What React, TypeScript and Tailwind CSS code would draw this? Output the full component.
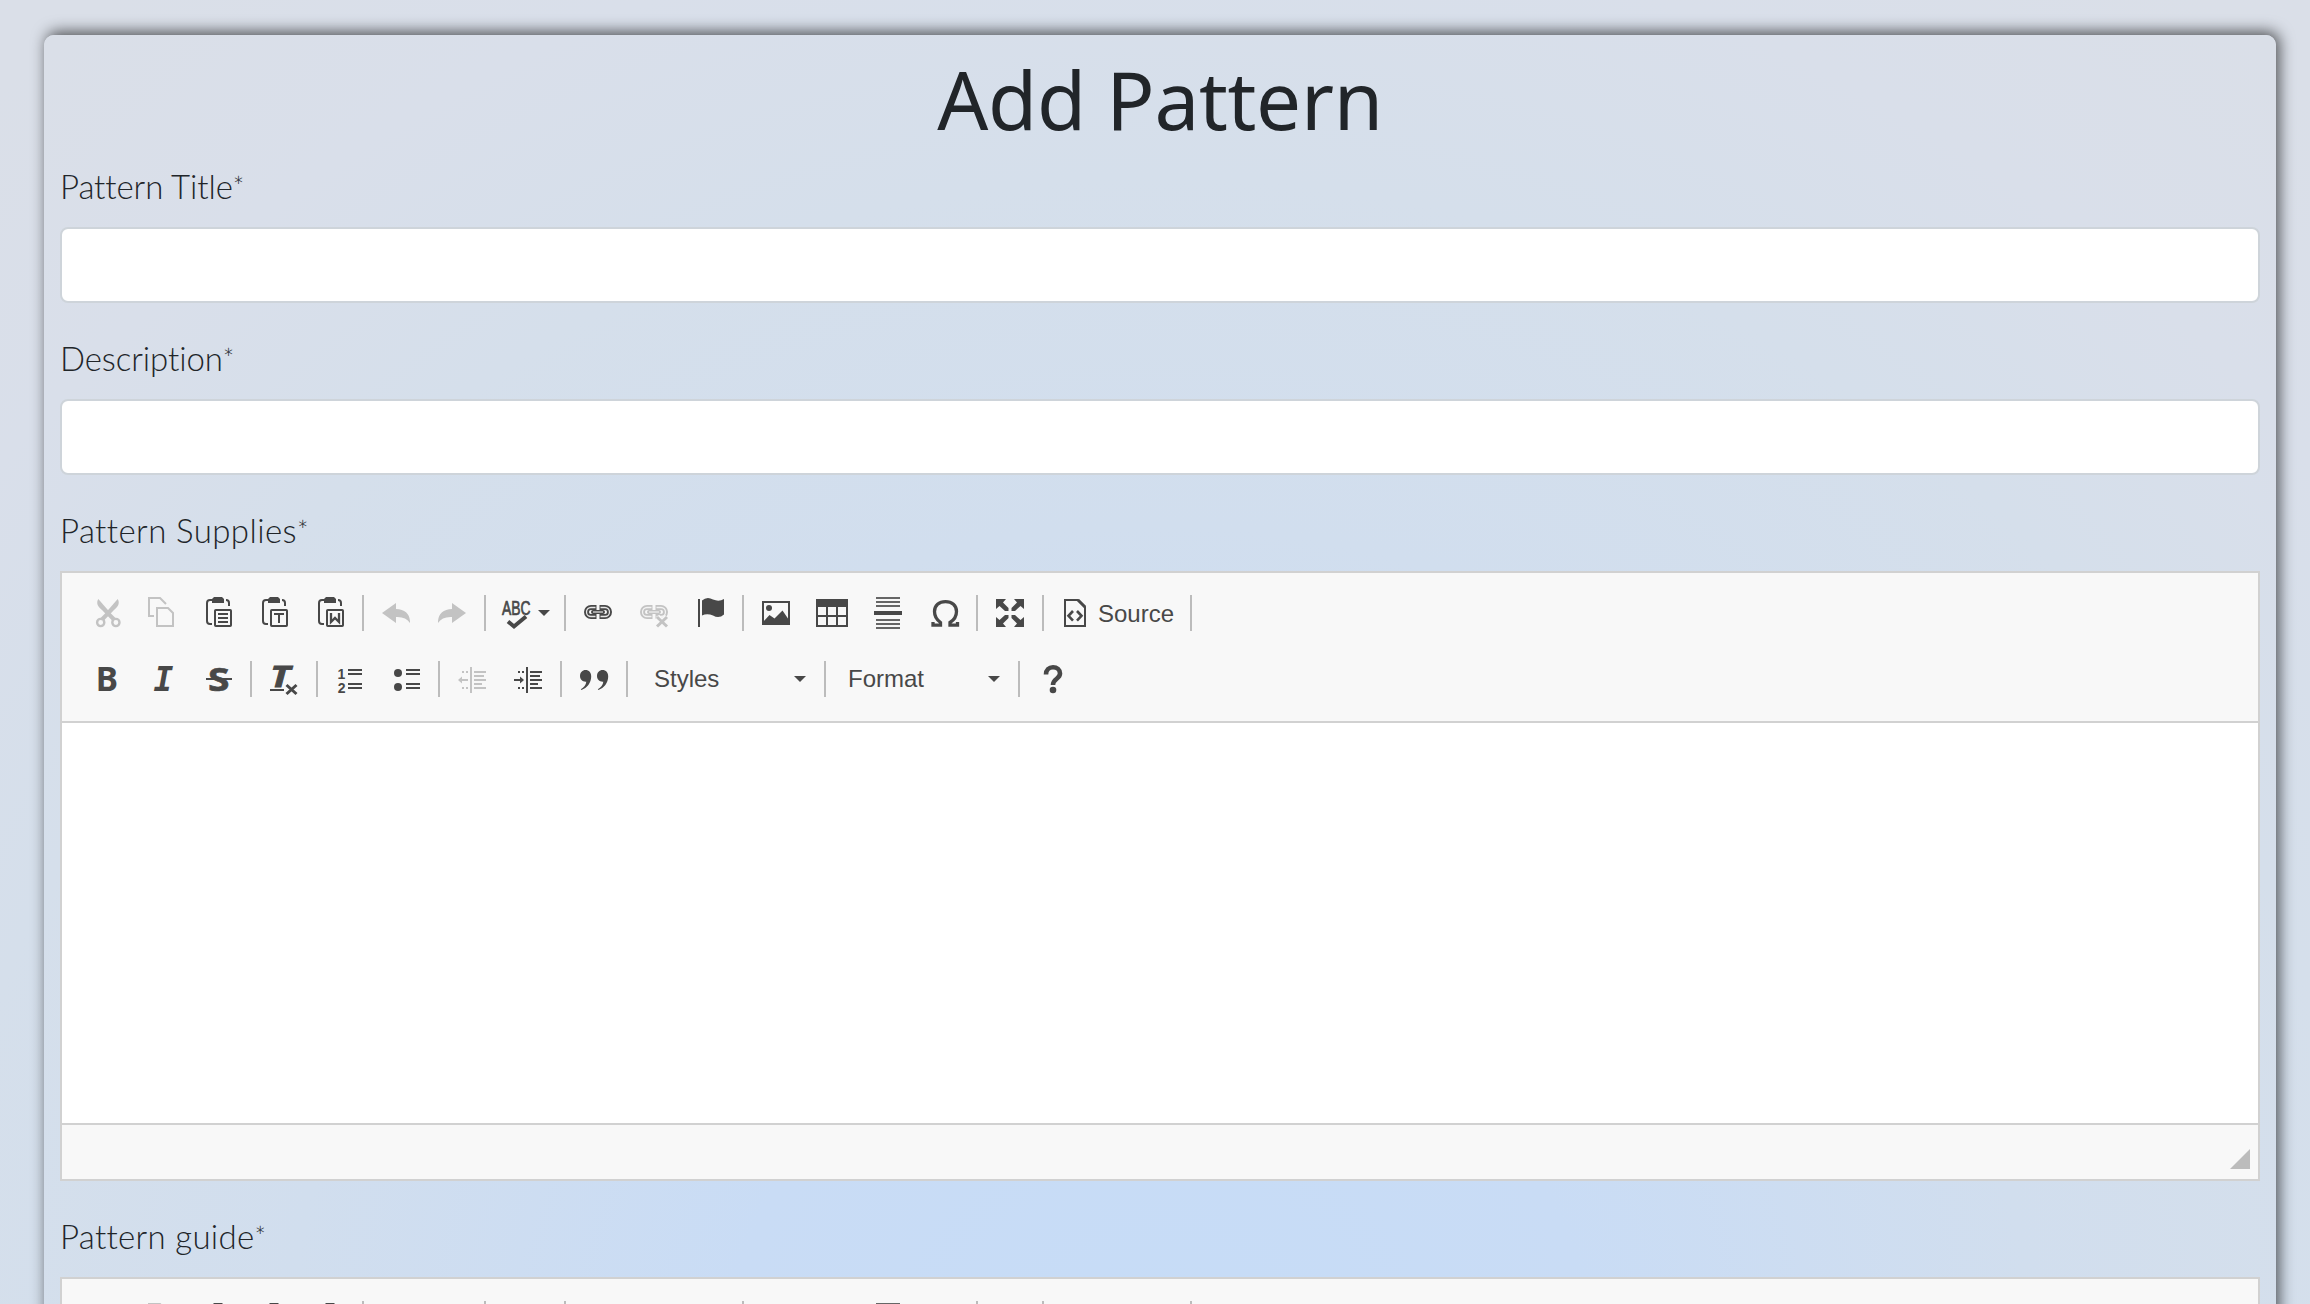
import React from "react";

const DARK = "#484848";
const MUTED = "#c3c3c3";

function Icon({ children, off }: { children: React.ReactNode; off?: boolean }) {
  return (
    <svg
      width="32"
      height="32"
      viewBox="0 0 32 32"
      fill="none"
      stroke="none"
      className="block shrink-0 overflow-visible"
      style={{ color: off ? MUTED : DARK }}
    >
      {children}
    </svg>
  );
}

function Btn({ children, off, label }: { children: React.ReactNode; off?: boolean; label: string }) {
  return (
    <button type="button" aria-label={label} className="flex h-9 w-14 shrink-0 items-center justify-center">
      <Icon off={off}>{children}</Icon>
    </button>
  );
}

function Sep() {
  return <span className="mx-1 h-9 w-0.5 shrink-0 bg-[#bcbcbc]" />;
}

function Caret() {
  return (
    <svg width="12" height="6" viewBox="0 0 12 6" className="block shrink-0">
      <path d="M0 0H12L6 6Z" fill={DARK} />
    </svg>
  );
}

const clipboard = (
  <>
    <path d="M10 3H8Q5 3 5 6V24Q5 27 8 27H10M24 3Q27 3 27 6V9" stroke="currentColor" strokeWidth="2" />
    <path d="M12 0H20L22 2V6H10V2Z" fill="currentColor" />
    <rect x="13" y="13" width="16" height="16" rx="0.8" stroke="currentColor" strokeWidth="2" />
  </>
);

const undoShape = "M2 16L16 6V12Q29 12.5 30 24V26Q26 19.500 16 20V26Z";

const chain = (
  <>
    <path
      d="M14.500 10.500H9A4.500 4.500 0 0 0 9 19.500H14.500M17.500 10.500H23A4.500 4.500 0 0 1 23 19.500H17.500"
      stroke="currentColor"
      strokeWidth="5"
    />
    <path
      d="M13.500 10.500H9A4.500 4.500 0 0 0 9 19.500H13.500M18.500 10.500H23A4.500 4.500 0 0 1 23 19.500H18.500"
      stroke="#f8f8f8"
      strokeWidth="1.300"
      opacity="0.9"
    />
    <path d="M11 15H21" stroke="currentColor" strokeWidth="4" strokeLinecap="round" />
    <path d="M11 15H21" stroke="#f8f8f8" strokeWidth="1.200" opacity="0.9" />
  </>
);

function IndentLines() {
  return (
    <path
      d="M15 4V30M18 9H30M18 13H28M18 17H30M18 21H26M18 25H30M6 9H8M10 9H12M6 25H8M10 25H12"
      stroke="currentColor"
      strokeWidth="2"
    />
  );
}

function TopRow() {
  return (
    <div className="flex h-9 items-center">
      <Btn label="Cut" off>
        <path d="M8.300 2C5.800 6 8 10 12 13L23 24.500L26 21.500L20.500 16Z" fill="currentColor" />
        <path d="M27.700 2C30.200 6 28 10 24 13L13 24.500L10 21.500L15.500 16Z" fill="currentColor" />
        <circle cx="10.700" cy="25.500" r="3.600" stroke="currentColor" strokeWidth="2.400" fill="#f8f8f8" />
        <circle cx="25.900" cy="25.500" r="3.600" stroke="currentColor" strokeWidth="2.400" fill="#f8f8f8" />
      </Btn>
      <Btn label="Copy" off>
        <path d="M8 19H3V1H14L20 7M11 11H22L27 16V29H11Z" stroke="currentColor" strokeWidth="2" />
      </Btn>
      <Btn label="Paste">
        {clipboard}
        <path d="M16 17H26M16 21H26M16 25H26" stroke="currentColor" strokeWidth="1.800" />
      </Btn>
      <Btn label="Paste as plain text">
        {clipboard}
        <path d="M16 17H26M21 17V26" stroke="currentColor" strokeWidth="2" />
      </Btn>
      <Btn label="Paste from Word">
        {clipboard}
        <path d="M17 16V25L21 21L25 25V16" stroke="currentColor" strokeWidth="2.300" />
      </Btn>
      <Sep />
      <Btn label="Undo" off>
        <path d={undoShape} fill="currentColor" />
      </Btn>
      <Btn label="Redo" off>
        <path d={undoShape} fill="currentColor" transform="translate(32 0) scale(-1 1)" />
      </Btn>
      <Sep />
      <button type="button" aria-label="Spell check" className="flex h-9 w-[70px] shrink-0 items-center gap-1 pl-3">
        <Icon>
          <text
            x="0"
            y="18"
            fontFamily="Liberation Sans"
            fontSize="19.500"
            textLength="28.500"
            lengthAdjust="spacingAndGlyphs"
            fill="currentColor"
            stroke="currentColor"
            strokeWidth="0.700"
          >
            ABC
          </text>
          <path d="M6 24.500L12 29.500L24 19.500" stroke="#f8f8f8" strokeWidth="6" />
          <path d="M6 24.500L12 29.500L24 19.500" stroke="currentColor" strokeWidth="4" />
        </Icon>
        <Caret />
      </button>
      <Sep />
      <Btn label="Link">{chain}</Btn>
      <Btn label="Unlink" off>
        {chain}
        <path d="M19 20L29 29.500M29 20L19 29.500" stroke="#f8f8f8" strokeWidth="6" />
        <path d="M19 20L29 29.500M29 20L19 29.500" stroke="currentColor" strokeWidth="3" />
      </Btn>
      <Btn label="Anchor">
        <path d="M4 2H6V30H4Z" fill="currentColor" />
        <path d="M8 3.500Q13 -1 19 2.500Q25 5 30 2V17.500Q25 22 19 18.500Q13 16 8 18.500Z" fill="currentColor" />
      </Btn>
      <Sep />
      <Btn label="Image">
        <rect x="3" y="5" width="26" height="22" stroke="currentColor" strokeWidth="2" />
        <circle cx="9" cy="11" r="3" fill="currentColor" />
        <path d="M3 27V25L9.500 18L14.500 21.500L22.500 13.500L29 23V27Z" fill="currentColor" />
      </Btn>
      <Btn label="Table">
        <path d="M0 2H32V10H0Z" fill="currentColor" />
        <path d="M1 9V29H31V9M11 9V29M21 9V29M1 19H31" stroke="currentColor" strokeWidth="2" />
      </Btn>
      <Btn label="Horizontal line">
        <path d="M2 14H30V18H2Z" fill="currentColor" />
        <path d="M4 1H28M4 5H28M4 9H28M4 23H28M4 27H28M4 31H28" stroke="#666666" strokeWidth="2" />
      </Btn>
      <Btn label="Special character">
        <path
          d="M5 25V28.200H12.500V25.500C9 23 6.500 19 6.500 14.500C6.500 8.500 11 4.600 17.500 4.600C24 4.600 28.500 8.500 28.500 14.500C28.500 19 26 23 22 25.500V28.200H29.500V25"
          stroke="currentColor"
          strokeWidth="3.300"
        />
      </Btn>
      <Sep />
      <Btn label="Maximize">
        <g fill="currentColor">
          <path d="M2 2H12L9 5.500L14.500 11V14H11L5.500 9L2 12Z" />
          <path d="M2 2H12L9 5.500L14.500 11V14H11L5.500 9L2 12Z" transform="translate(32 0) scale(-1 1)" />
          <path d="M2 2H12L9 5.500L14.500 11V14H11L5.500 9L2 12Z" transform="translate(0 32) scale(1 -1)" />
          <path d="M2 2H12L9 5.500L14.500 11V14H11L5.500 9L2 12Z" transform="translate(32 32) scale(-1 -1)" />
        </g>
      </Btn>
      <Sep />
      <button type="button" className="flex h-9 w-[138px] shrink-0 items-center gap-1.5 pl-3">
        <Icon>
          <path d="M5 3H18L25 10V29H5Z" stroke="currentColor" strokeWidth="2" />
          <path d="M18 3L25 10" stroke="currentColor" strokeWidth="3" />
          <path d="M13 14L8.500 18.800L13 23.600M17 14L21.500 18.800L17 23.600" stroke="currentColor" strokeWidth="2.600" />
        </Icon>
        <span className="pt-0.5">Source</span>
      </button>
      <Sep />
    </div>
  );
}

function BottomRow() {
  return (
    <div className="flex h-9 items-center">
      <Btn label="Bold">
        <text x="5.800" y="28" fontFamily="Noto Sans" fontWeight="700" fontSize="33.500" fill="currentColor">
          B
        </text>
      </Btn>
      <Btn label="Italic">
        <text x="7.500" y="28" fontFamily="DejaVu Sans Mono" fontWeight="700" fontStyle="italic" fontSize="33" fill="currentColor">
          I
        </text>
      </Btn>
      <Btn label="Strikethrough">
        <text
          x="6"
          y="28"
          fontFamily="Noto Sans"
          fontWeight="700"
          fontSize="33"
          textLength="21.500"
          lengthAdjust="spacingAndGlyphs"
          fill="currentColor"
          stroke="currentColor"
          strokeWidth="0.600"
        >
          S
        </text>
        <path d="M4 16H30" stroke="currentColor" strokeWidth="2" />
      </Btn>
      <Sep />
      <Btn label="Remove format">
        <text
          x="2.200"
          y="24"
          fontFamily="Noto Sans"
          fontWeight="700"
          fontStyle="italic"
          fontSize="28"
          textLength="20"
          lengthAdjust="spacingAndGlyphs"
          fill="currentColor"
          stroke="currentColor"
          strokeWidth="0.800"
        >
          T
        </text>
        <path d="M2 27H16" stroke="currentColor" strokeWidth="2" />
        <path d="M18.500 22L28.500 31M28.500 22L18.500 31" stroke="currentColor" strokeWidth="3" />
      </Btn>
      <Sep />
      <Btn label="Numbered list">
        <g fontFamily="Liberation Sans" fontWeight="700" fontSize="14" fill="currentColor">
          <text x="3.500" y="16">1</text>
          <text x="3.800" y="30">2</text>
        </g>
        <path d="M14 7H28M14 11H28M14 21H28M14 25H28" stroke="currentColor" strokeWidth="2" />
      </Btn>
      <Btn label="Bulleted list">
        <circle cx="8" cy="10" r="4" fill="currentColor" />
        <circle cx="8" cy="24" r="4" fill="currentColor" />
        <path d="M16 7H30M16 11H30M16 21H30M16 25H30" stroke="currentColor" strokeWidth="2" />
      </Btn>
      <Sep />
      <Btn label="Decrease indent" off>
        <IndentLines />
        <path d="M4 17H12" stroke="currentColor" strokeWidth="2" />
        <path d="M2 17L6 13.500V20.500Z" fill="currentColor" />
      </Btn>
      <Btn label="Increase indent">
        <IndentLines />
        <path d="M2 17H10" stroke="currentColor" strokeWidth="2" />
        <path d="M12 17L8 13.500V20.500Z" fill="currentColor" />
      </Btn>
      <Sep />
      <Btn label="Block quote">
        <path d="M7.500 7C11 7 13.200 9.500 13.200 13.500C13.200 20 9 25 3.500 27L2.800 26.200C6 24.500 8 22 8.300 18.700C4.500 19 2 16.500 2 13C2 9.500 4.500 7 7.500 7Z" fill="currentColor" />
        <path d="M7.500 7C11 7 13.200 9.500 13.200 13.500C13.200 20 9 25 3.500 27L2.800 26.200C6 24.500 8 22 8.300 18.700C4.500 19 2 16.500 2 13C2 9.500 4.500 7 7.500 7Z" fill="currentColor" transform="translate(17 0)" />
      </Btn>
      <Sep />
      <button type="button" className="flex h-9 w-[188px] shrink-0 items-center justify-between pr-3.5 pl-[22px]">
        <span>Styles</span>
        <Caret />
      </button>
      <Sep />
      <button type="button" className="flex h-9 w-[184px] shrink-0 items-center justify-between pr-3.5 pl-[18px]">
        <span>Format</span>
        <Caret />
      </button>
      <Sep />
      <Btn label="About">
        <path d="M10 11.500C10 7 13 4.300 17 4.300C21 4.300 24 7 24 10.500C24 16 17 15.500 17 22" stroke="currentColor" strokeWidth="4.600" />
        <circle cx="17" cy="27" r="3.300" fill="currentColor" />
      </Btn>
    </div>
  );
}

function Editor() {
  return (
    <div className="mb-8 flex h-[610px] flex-col border-2 border-[#d1d1d1] bg-white">
      <div className="flex h-[150px] shrink-0 flex-col gap-[30px] border-b-2 border-[#d1d1d1] bg-[#f8f8f8] pt-[22px] pl-4 font-['Liberation_Sans',Arial,sans-serif] text-[24px] leading-9 text-[#484848]">
        <TopRow />
        <BottomRow />
      </div>
      <div className="flex-1" />
      <div className="flex h-14 shrink-0 items-end justify-end border-t-2 border-[#d1d1d1] bg-[#f8f8f8] pr-2 pb-2.5">
        <svg width="20" height="20" viewBox="0 0 20 20" className="block">
          <path d="M20 0V20H0Z" fill="#bcbcbc" />
        </svg>
      </div>
    </div>
  );
}

function Label({ children, className }: { children: string; className: string }) {
  return (
    <label className="mb-4 block h-12 font-['Lato',sans-serif] text-[33px] leading-[46px] font-light whitespace-nowrap text-[#212529] [font-variant-ligatures:none]">
      <span className={className}>{children}</span>
      <span className="align-[3px] text-[27px] leading-none">*</span>
    </label>
  );
}

function TextInput() {
  return <input type="text" className="mb-8 block h-[76px] w-full rounded-lg border-2 border-[#ced4da] bg-white px-6 text-[32px] outline-none" />;
}

export default function App() {
  return (
    <div className="h-[1304px] w-full overflow-hidden bg-[radial-gradient(1750px_1750px_at_50%_1400px,#c6dcf7_0%,#c9dcf5_25%,#d1deee_50%,#d5dfeb_70%,#d9dfea_85%,#dadfe8_100%)] pt-[35px] pr-[34px] pl-11">
      <main className="flow-root h-[2000px] rounded-[10px] bg-[radial-gradient(1750px_1750px_at_50%_1365px,#c6dcf7_0%,#c9dcf5_25%,#d1deee_50%,#d5dfeb_70%,#d9dfea_85%,#dadfe8_100%)] px-4 pt-4 shadow-[3px_-3px_15px_rgba(0,0,0,0.65)]">
        <h1 className="mb-4 text-center font-['Noto_Sans',sans-serif] text-[80px] leading-[96px] tracking-[-0.3px] text-[#212529]">Add Pattern</h1>
        <Label className="tracking-[-0.1px]">Pattern Title</Label>
        <TextInput />
        <Label className="tracking-[-0.1px]">Description</Label>
        <TextInput />
        <Label className="tracking-[0.4px]">Pattern Supplies</Label>
        <Editor />
        <Label className="tracking-[0.3px]">Pattern guide</Label>
        <Editor />
      </main>
    </div>
  );
}
